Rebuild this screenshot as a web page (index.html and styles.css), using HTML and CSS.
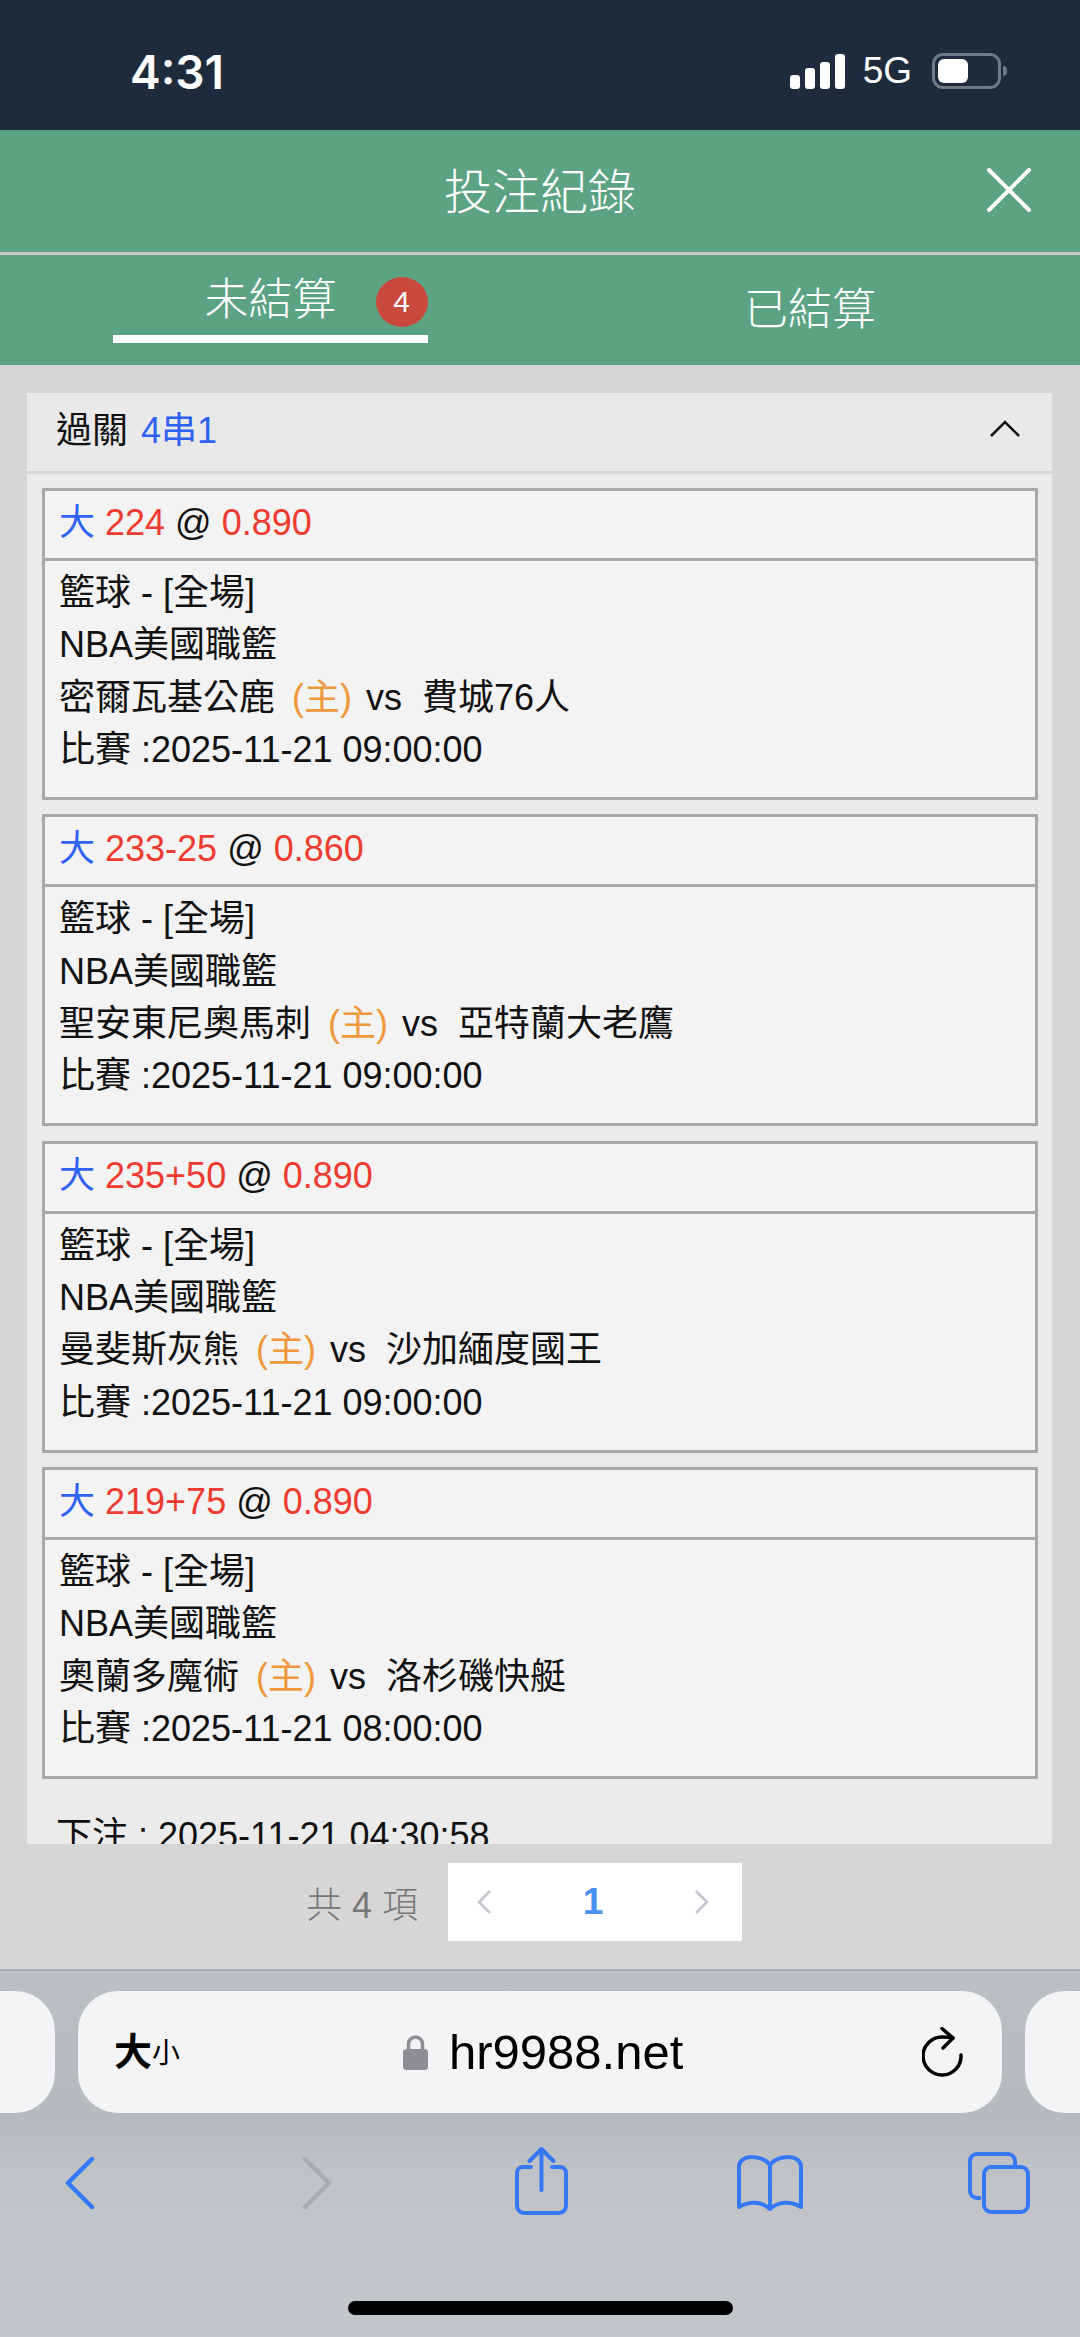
FILE: index.html
```html
<!DOCTYPE html>
<html lang="zh-Hant">

<head>
    <meta charset="UTF-8">
    <meta name="viewport" content="width=device-width, initial-scale=1.0">
    <title>投注紀錄</title>
    <link rel="stylesheet" href="styles.css">
</head>

<body>
<div class="phone">
    <div class="status-bar">
        <div class="status-time">4:31</div>
        <div class="status-right">
            <div class="signal">
                <span class="bar bar-1"></span>
                <span class="bar bar-2"></span>
                <span class="bar bar-3"></span>
                <span class="bar bar-4"></span>
            </div>
            <div class="network">5G</div>
            <div class="battery"><span class="battery-fill"></span></div>
            <span class="battery-cap"></span>
        </div>
    </div>

    <div class="title-bar">
        <div class="title">投注紀錄</div>
        <svg class="close-icon" width="44" height="44" viewBox="0 0 44 44">
            <path d="M2 2 L42 42 M42 2 L2 42" fill="none" stroke="#fff" stroke-width="4" stroke-linecap="round"/>
        </svg>
    </div>

    <div class="tabs">
        <div class="tab">
            <div class="tab-inner active">
                <span class="tab-label">未結算</span>
                <span class="badge">4</span>
            </div>
        </div>
        <div class="tab">
            <div class="tab-inner">
                <span class="tab-label">已結算</span>
            </div>
        </div>
    </div>

    <div class="content">
        <div class="record-scroll">
            <div class="record-head">
                <div>過關 <span class="blue parlay">4串1</span></div>
                <svg class="chevron-up" width="32" height="18" viewBox="0 0 32 18">
                    <path d="M2 16 L16 2 L30 16" fill="none" stroke="#111" stroke-width="2.5"/>
                </svg>
            </div>
            <div class="record-body">
                <div class="bet-card">
                    <div class="bet-head"><span class="blue">大</span> <span class="red">224</span> @ <span class="red">0.890</span></div>
                    <div class="bet-info">
                        <div>籃球 - [全場]</div>
                        <div>NBA美國職籃</div>
                        <div>密爾瓦基公鹿 <span class="orange">(主)</span> vs &nbsp;費城76人</div>
                        <div>比賽 :2025-11-21 09:00:00</div>
                    </div>
                </div>
                <div class="bet-card">
                    <div class="bet-head"><span class="blue">大</span> <span class="red">233-25</span> @ <span class="red">0.860</span></div>
                    <div class="bet-info">
                        <div>籃球 - [全場]</div>
                        <div>NBA美國職籃</div>
                        <div>聖安東尼奧馬刺 <span class="orange">(主)</span> vs &nbsp;亞特蘭大老鷹</div>
                        <div>比賽 :2025-11-21 09:00:00</div>
                    </div>
                </div>
                <div class="bet-card">
                    <div class="bet-head"><span class="blue">大</span> <span class="red">235+50</span> @ <span class="red">0.890</span></div>
                    <div class="bet-info">
                        <div>籃球 - [全場]</div>
                        <div>NBA美國職籃</div>
                        <div>曼斐斯灰熊 <span class="orange">(主)</span> vs &nbsp;沙加緬度國王</div>
                        <div>比賽 :2025-11-21 09:00:00</div>
                    </div>
                </div>
                <div class="bet-card">
                    <div class="bet-head"><span class="blue">大</span> <span class="red">219+75</span> @ <span class="red">0.890</span></div>
                    <div class="bet-info">
                        <div>籃球 - [全場]</div>
                        <div>NBA美國職籃</div>
                        <div>奧蘭多魔術 <span class="orange">(主)</span> vs &nbsp;洛杉磯快艇</div>
                        <div>比賽 :2025-11-21 08:00:00</div>
                    </div>
                </div>
                <div class="bet-time">下注 : 2025-11-21 04:30:58</div>
            </div>
        </div>

        <div class="pager">
            <div class="pager-total">共 4 項</div>
            <div class="pager-box">
                <svg width="18" height="26" viewBox="0 0 18 26">
                    <path d="M15 2 L4 13 L15 24" fill="none" stroke="#c0c4cc" stroke-width="2.5"/>
                </svg>
                <span class="pager-num">1</span>
                <svg width="18" height="26" viewBox="0 0 18 26">
                    <path d="M3 2 L14 13 L3 24" fill="none" stroke="#c0c4cc" stroke-width="2.5"/>
                </svg>
            </div>
        </div>
    </div>

    <div class="safari">
        <div class="address-row">
            <div class="pill pill-side pill-left"></div>
            <div class="pill pill-main">
                <div class="text-size"><span class="big">大</span><span class="small">小</span></div>
                <div class="site">
                    <svg class="lock" width="25" height="36" viewBox="0 0 25 36">
                        <path d="M5.5 17 V10 A7 7 0 0 1 19.5 10 V17" fill="none" stroke="#8e8e93" stroke-width="3.5"/>
                        <rect x="0" y="15" width="25" height="21" rx="3.5" fill="#8e8e93"/>
                    </svg>
                    <span class="site-name">hr9988.net</span>
                </div>
                <svg class="reload" width="42" height="50" viewBox="0 0 42 50">
                    <path d="M39 28 A19 19 0 1 1 20 10 C24 10 27 10 31 11" fill="none" stroke="#000" stroke-width="3.5" stroke-linecap="round"/>
                    <path d="M20 1.5 L31 11 L21 21" fill="none" stroke="#000" stroke-width="3.5" stroke-linecap="round" stroke-linejoin="round"/>
                </svg>
            </div>
            <div class="pill pill-side pill-right"></div>
        </div>

        <div class="toolbar">
            <svg class="tool tool-back" width="30" height="52" viewBox="0 0 30 52">
                <path d="M27 2 L3 26 L27 50" fill="none" stroke="#3478f6" stroke-width="4.5" stroke-linecap="round" stroke-linejoin="round"/>
            </svg>
            <svg class="tool tool-forward" width="30" height="52" viewBox="0 0 30 52">
                <path d="M3 2 L27 26 L3 50" fill="none" stroke="#a9abae" stroke-width="4.5" stroke-linecap="round" stroke-linejoin="round"/>
            </svg>
            <svg class="tool tool-share" width="53" height="68" viewBox="0 0 53 68">
                <path d="M16 20 H8 A6 6 0 0 0 2 26 V59 A7 7 0 0 0 9 66 H44 A7 7 0 0 0 51 59 V26 A6 6 0 0 0 45 20 H37" fill="none" stroke="#3478f6" stroke-width="4" stroke-linecap="round"/>
                <path d="M26.5 43 V3 M14.5 14 L26.5 2 L38.5 14" fill="none" stroke="#3478f6" stroke-width="4" stroke-linecap="round" stroke-linejoin="round"/>
            </svg>
            <svg class="tool tool-book" width="66" height="56" viewBox="0 0 66 56">
                <path d="M33 10 C28 3 20 2 14 2 C8 2 2 6 2 11 V52 C12 46 24 46 33 54 C42 46 54 46 64 52 V11 C64 6 58 2 52 2 C46 2 38 3 33 10 V54" fill="none" stroke="#3478f6" stroke-width="4" stroke-linecap="round" stroke-linejoin="round"/>
            </svg>
            <svg class="tool tool-tabs" width="62" height="62" viewBox="0 0 62 62">
                <path d="M13 46 H9 A7 7 0 0 1 2 39 V9 A7 7 0 0 1 9 2 H40 A7 7 0 0 1 47 9 V13" fill="none" stroke="#3478f6" stroke-width="4"/>
                <rect x="16" y="15" width="44" height="45" rx="7" fill="none" stroke="#3478f6" stroke-width="4"/>
            </svg>
        </div>

        <div class="home-indicator"></div>
    </div>
</div>
</body>

</html>
```

FILE: styles.css
```css
* {
    box-sizing: border-box;
}

body {
    margin: 0;
    font-family: "Liberation Sans", "Noto Sans CJK TC", sans-serif;
    font-size: 36px;
    color: #111;
    background-color: #d6d6d6;
}

.phone {
    width: 1080px;
    height: 2337px;
    display: flex;
    flex-direction: column;
    overflow: hidden;
}

.blue {
    color: #2f62f0;
}

.red {
    color: #ee3b2f;
}

.orange {
    margin: 0 4px 0 7px;
    color: #f0983c;
}

/* status bar */
.status-bar {
    height: 130px;
    flex: none;
    padding: 52px 73px 0 130px;
    display: flex;
    justify-content: space-between;
    align-items: flex-start;
    background-color: #1e2b3c;
    color: #fff;
}

.status-time {
    font-family: Inter, "Liberation Sans", sans-serif;
    font-size: 46px;
    font-weight: 600;
    line-height: 40px;
}

.status-right {
    display: flex;
    align-items: flex-start;
    padding-top: 1px;
}

.signal {
    display: flex;
    align-items: flex-end;
    gap: 5px;
    height: 36px;
}

.bar {
    width: 10px;
    border-radius: 3px;
    background-color: #fff;
}

.bar-1 {
    height: 14px;
}

.bar-2 {
    height: 21px;
}

.bar-3 {
    height: 27px;
}

.bar-4 {
    height: 35px;
}

.network {
    margin-left: 18px;
    font-size: 37px;
    line-height: 36px;
}

.battery {
    width: 69px;
    height: 36px;
    margin-left: 20px;
    padding: 3px;
    border: 3px solid #6f7a87;
    border-radius: 11px;
}

.battery-fill {
    display: block;
    width: 30px;
    height: 24px;
    border-radius: 6px;
    background-color: #fff;
}

.battery-cap {
    width: 4px;
    height: 10px;
    margin: 13px 0 0 2px;
    border-radius: 0 4px 4px 0;
    background-color: #6f7a87;
}

/* green header */
.title-bar {
    height: 125px;
    flex: none;
    position: relative;
    padding-bottom: 7px;
    display: flex;
    justify-content: center;
    align-items: center;
    border-bottom: 3px solid #c8c8c8;
    background-color: #5ca383;
    color: #fff;
}

.title {
    font-size: 48px;
    font-weight: 300;
}

.close-icon {
    position: absolute;
    top: 38px;
    right: 49px;
}

.tabs {
    height: 110px;
    flex: none;
    display: flex;
    background-color: #5ca383;
    color: #fff;
}

.tab {
    flex: 1;
    display: flex;
    justify-content: center;
    font-size: 44px;
    font-weight: 300;
}

.tab-inner {
    height: 88px;
    padding-top: 30px;
    line-height: 50px;
    white-space: nowrap;
}

.tab-inner.active {
    display: flex;
    align-items: flex-start;
    width: 315px;
    padding: 20px 0 0 92px;
    border-bottom: 8px solid #fff;
}

.badge {
    flex: none;
    width: 52px;
    height: 50px;
    margin: 2px 0 0 39px;
    border-radius: 50%;
    font-size: 30px;
    line-height: 50px;
    text-align: center;
    background-color: #c9493f;
}

/* records */
.content {
    flex: 1;
    padding: 28px 28px 0 27px;
    background-color: #d6d6d6;
}

.record-scroll {
    height: 1451px;
    overflow: hidden;
    background-color: #ebebeb;
}

.record-head {
    height: 81px;
    padding: 0 31px 10px 29px;
    display: flex;
    justify-content: space-between;
    align-items: center;
    border-bottom: 3px solid #d6d6d6;
    background-color: #e9e9e9;
}

.chevron-up {
    margin-top: 4px;
}

.parlay {
    margin-left: 3px;
}

.record-body {
    padding: 14px 14px 0 15px;
}

.bet-card {
    height: 312px;
    margin-bottom: 14.4px;
    border: 3px solid #a8a8a8;
    background-color: #f3f3f3;
}

.bet-head {
    height: 70px;
    padding: 0 14px;
    line-height: 64px;
    border-bottom: 3px solid #a8a8a8;
}

.bet-info {
    padding: 6px 14px 0;
    line-height: 52.3px;
}

.bet-time {
    padding: 16px 14px 0;
    line-height: 52px;
}

/* pagination */
.pager {
    margin-top: 19px;
    padding-left: 279px;
    display: flex;
    align-items: center;
}

.pager-total {
    width: 142px;
    font-size: 36px;
    font-weight: 300;
    color: #777;
}

.pager-box {
    width: 294px;
    height: 78px;
    padding: 0 31px 0 27px;
    display: flex;
    justify-content: space-between;
    align-items: center;
    background-color: #fff;
}

.pager-num {
    font-size: 37px;
    font-weight: bold;
    color: #4a90f5;
}

/* safari chrome */
.safari {
    height: 368px;
    flex: none;
    border-top: 2px solid #a9acb0;
    background-image: linear-gradient(180deg, #bcc0c5 0%, #b6b9be 39%, #c0c3c8 58%, #c3c6cb 100%);
}

.address-row {
    margin-top: 20px;
    display: flex;
    gap: 23px;
}

.pill {
    height: 122px;
    background-color: #f3f4f6;
}

.pill-side {
    width: 55px;
}

.pill-left {
    border-radius: 0 40px 40px 0;
}

.pill-right {
    border-radius: 40px 0 0 40px;
}

.pill-main {
    width: 924px;
    position: relative;
    padding: 0 38px 0 36px;
    display: flex;
    justify-content: space-between;
    align-items: center;
    border-radius: 40px;
}

.text-size {
    display: flex;
    align-items: flex-end;
    font-weight: bold;
    color: #000;
}

.big {
    font-size: 38px;
    line-height: 40px;
}

.small {
    font-size: 28px;
    line-height: 36px;
    font-weight: normal;
}

.site {
    position: absolute;
    left: 325px;
    top: 0;
    height: 122px;
    display: flex;
    align-items: center;
    gap: 21px;
}

.site-name {
    font-size: 49px;
    color: #000;
}

.toolbar {
    margin-top: 34px;
    height: 68px;
    position: relative;
    display: flex;
    align-items: flex-start;
}

.tool {
    flex: none;
}

.tool-back {
    margin: 10px 0 0 65px;
}

.tool-forward {
    margin: 10px 0 0 207px;
}

.tool-share {
    margin-left: 183px;
}

.tool-book {
    margin: 8px 0 0 169px;
}

.tool-tabs {
    margin: 5px 0 0 165px;
}

.home-indicator {
    width: 385px;
    height: 14px;
    margin: 86px auto 0;
    border-radius: 7px;
    background-color: #000;
}
```
